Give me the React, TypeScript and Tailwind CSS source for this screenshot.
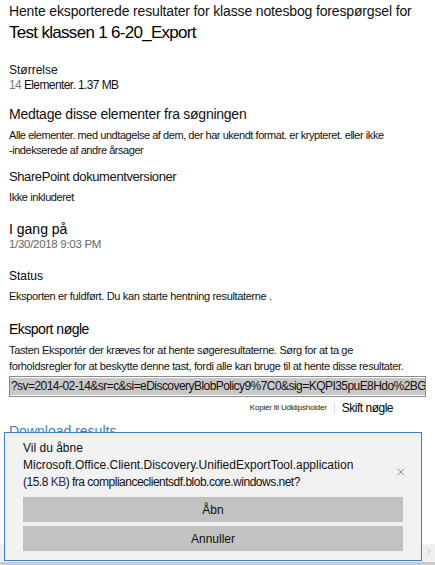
import { X, ChevronRight } from "lucide-react";

const FONT = { fontFamily: '"Liberation Sans", Arial, sans-serif' };

export default function App() {
  return (
    <div className="relative h-[565px] w-[435px] overflow-hidden bg-white" style={FONT}>
      <div className="px-[9px] pt-[2px]">
        <h1 className="text-[14px] leading-[18px] tracking-[-0.15px] text-[#111]">
          Hente eksporterede resultater for klasse notesbog forespørgsel for
        </h1>
        <h2 className="mt-[2px] text-[17px] leading-[22px] tracking-[-0.7px] text-black">
          Test klassen 1 6-20_Export
        </h2>

        <div className="mt-[19px]">
          <div className="text-[12px] leading-[15px] text-[#111]">Størrelse</div>
          <div className="text-[12px] leading-[15px] tracking-[-0.6px] text-[#111]">
            <span className="text-[#777]">14</span> Elementer. 1.37 MB
          </div>
        </div>

        <div className="mt-[12px]">
          <div className="text-[14px] leading-[18px] tracking-[-0.25px] text-[#111]">
            Medtage disse elementer fra søgningen
          </div>
          <p className="mt-[5px] text-[11px] leading-[15px] tracking-[-0.45px] text-[#111]">
            Alle elementer. med undtagelse af dem, der har ukendt format. er krypteret. eller ikke
            <br />
            -indekserede af andre årsager
          </p>
        </div>

        <div className="mt-[10px]">
          <div className="text-[13px] leading-[18px] tracking-[-0.4px] text-[#111]">
            SharePoint dokumentversioner
          </div>
          <div className="mt-[4px] text-[11px] leading-[15px] tracking-[-0.4px] text-[#111]">
            Ikke inkluderet
          </div>
        </div>

        <div className="mt-[16px]">
          <div className="text-[14px] leading-[16px] text-black">I gang på</div>
          <div className="text-[11.5px] leading-[15px] tracking-[-0.3px] text-[#666]">1/30/2018 9:03 PM</div>
        </div>

        <div className="mt-[16px]">
          <div className="text-[12px] leading-[16px] text-black">Status</div>
          <div className="mt-[5px] text-[11px] leading-[14px] tracking-[-0.35px] text-[#111]">
            Eksporten er fuldført. Du kan starte hentning resultaterne .
          </div>
        </div>

        <div className="mt-[17px]">
          <div className="text-[14px] leading-[18px] tracking-[-0.5px] text-black">Eksport nøgle</div>
          <p className="mt-[4px] text-[11px] leading-[16px] tracking-[-0.35px] text-[#111]">
            Tasten Eksportér der kræves for at hente søgeresultaterne. Sørg for at ta ge
            <br />
            forholdsregler for at beskytte denne tast, fordi alle kan bruge til at hente disse resultater.
          </p>
          <div className="mt-[2px] flex h-[21px] items-center overflow-hidden border border-[#8a8a8a] bg-white">
            <span className="whitespace-nowrap bg-[#c8c8c8] pl-[1px] text-[12px] leading-[17px] tracking-[-0.55px] text-[#111]">
              ?sv=2014-02-14&amp;sr=c&amp;si=eDiscoveryBlobPolicy9%7C0&amp;sig=KQPI35puE8Hdo%2BG3dx
            </span>
          </div>
          <div className="mt-[3px] flex items-center justify-end pr-[33px]">
            <span className="text-[8px] leading-[10px] tracking-[-0.2px] text-[#222]">Kopiér til Udklipsholder</span>
            <span className="mx-[7px] h-[12px] w-px bg-[#ddd]" />
            <span className="text-[12px] leading-[16px] tracking-[-0.5px] text-black">Skift nøgle</span>
          </div>
        </div>

        <div className="mt-[6px] text-[14px] leading-[18px] text-[#3a7fc8]">Download results</div>
      </div>

      {/* browser download prompt */}
      <div className="absolute bottom-0 left-0 right-0 h-[21px] bg-[#f0f0f0]">
        <div className="absolute bottom-0 left-0 right-0 h-[3px] bg-[#c9c9c9]" />
        <ChevronRight
          className="absolute right-[1px] top-[1px] h-[14px] w-[10px] text-[#a0a0a0]"
          strokeWidth={1.5}
        />
      </div>
      <div className="absolute bottom-[4px] left-[4px] h-[129px] w-[418px] border border-[#3b80d8] bg-[#f2f2f2] pl-[18px] pt-[7px]">
        <div className="flex items-start">
          <div className="flex-1 text-[12px] leading-[17px] text-[#111]">
            Vil du åbne
            <br />
            Microsoft.Office.Client.Discovery.UnifiedExportTool.application
            <br />
            <span className="tracking-[-0.5px]">
              (15.8 <span className="text-[#3b2a6e]">KB</span>) fra complianceclientsdf.blob.core.windows.net?
            </span>
          </div>
          <X className="mr-[14px] mt-[26px] h-[12px] w-[12px] text-[#555]" strokeWidth={1.3} />
        </div>
        <div className="mt-[6px] flex w-[380px] flex-col gap-[4px]">
          <button className="h-[25px] bg-[#c2c2c2] text-[12px] text-[#111]">Åbn</button>
          <button className="h-[25px] bg-[#c2c2c2] text-[12px] text-[#111]">Annuller</button>
        </div>
      </div>
    </div>
  );
}
